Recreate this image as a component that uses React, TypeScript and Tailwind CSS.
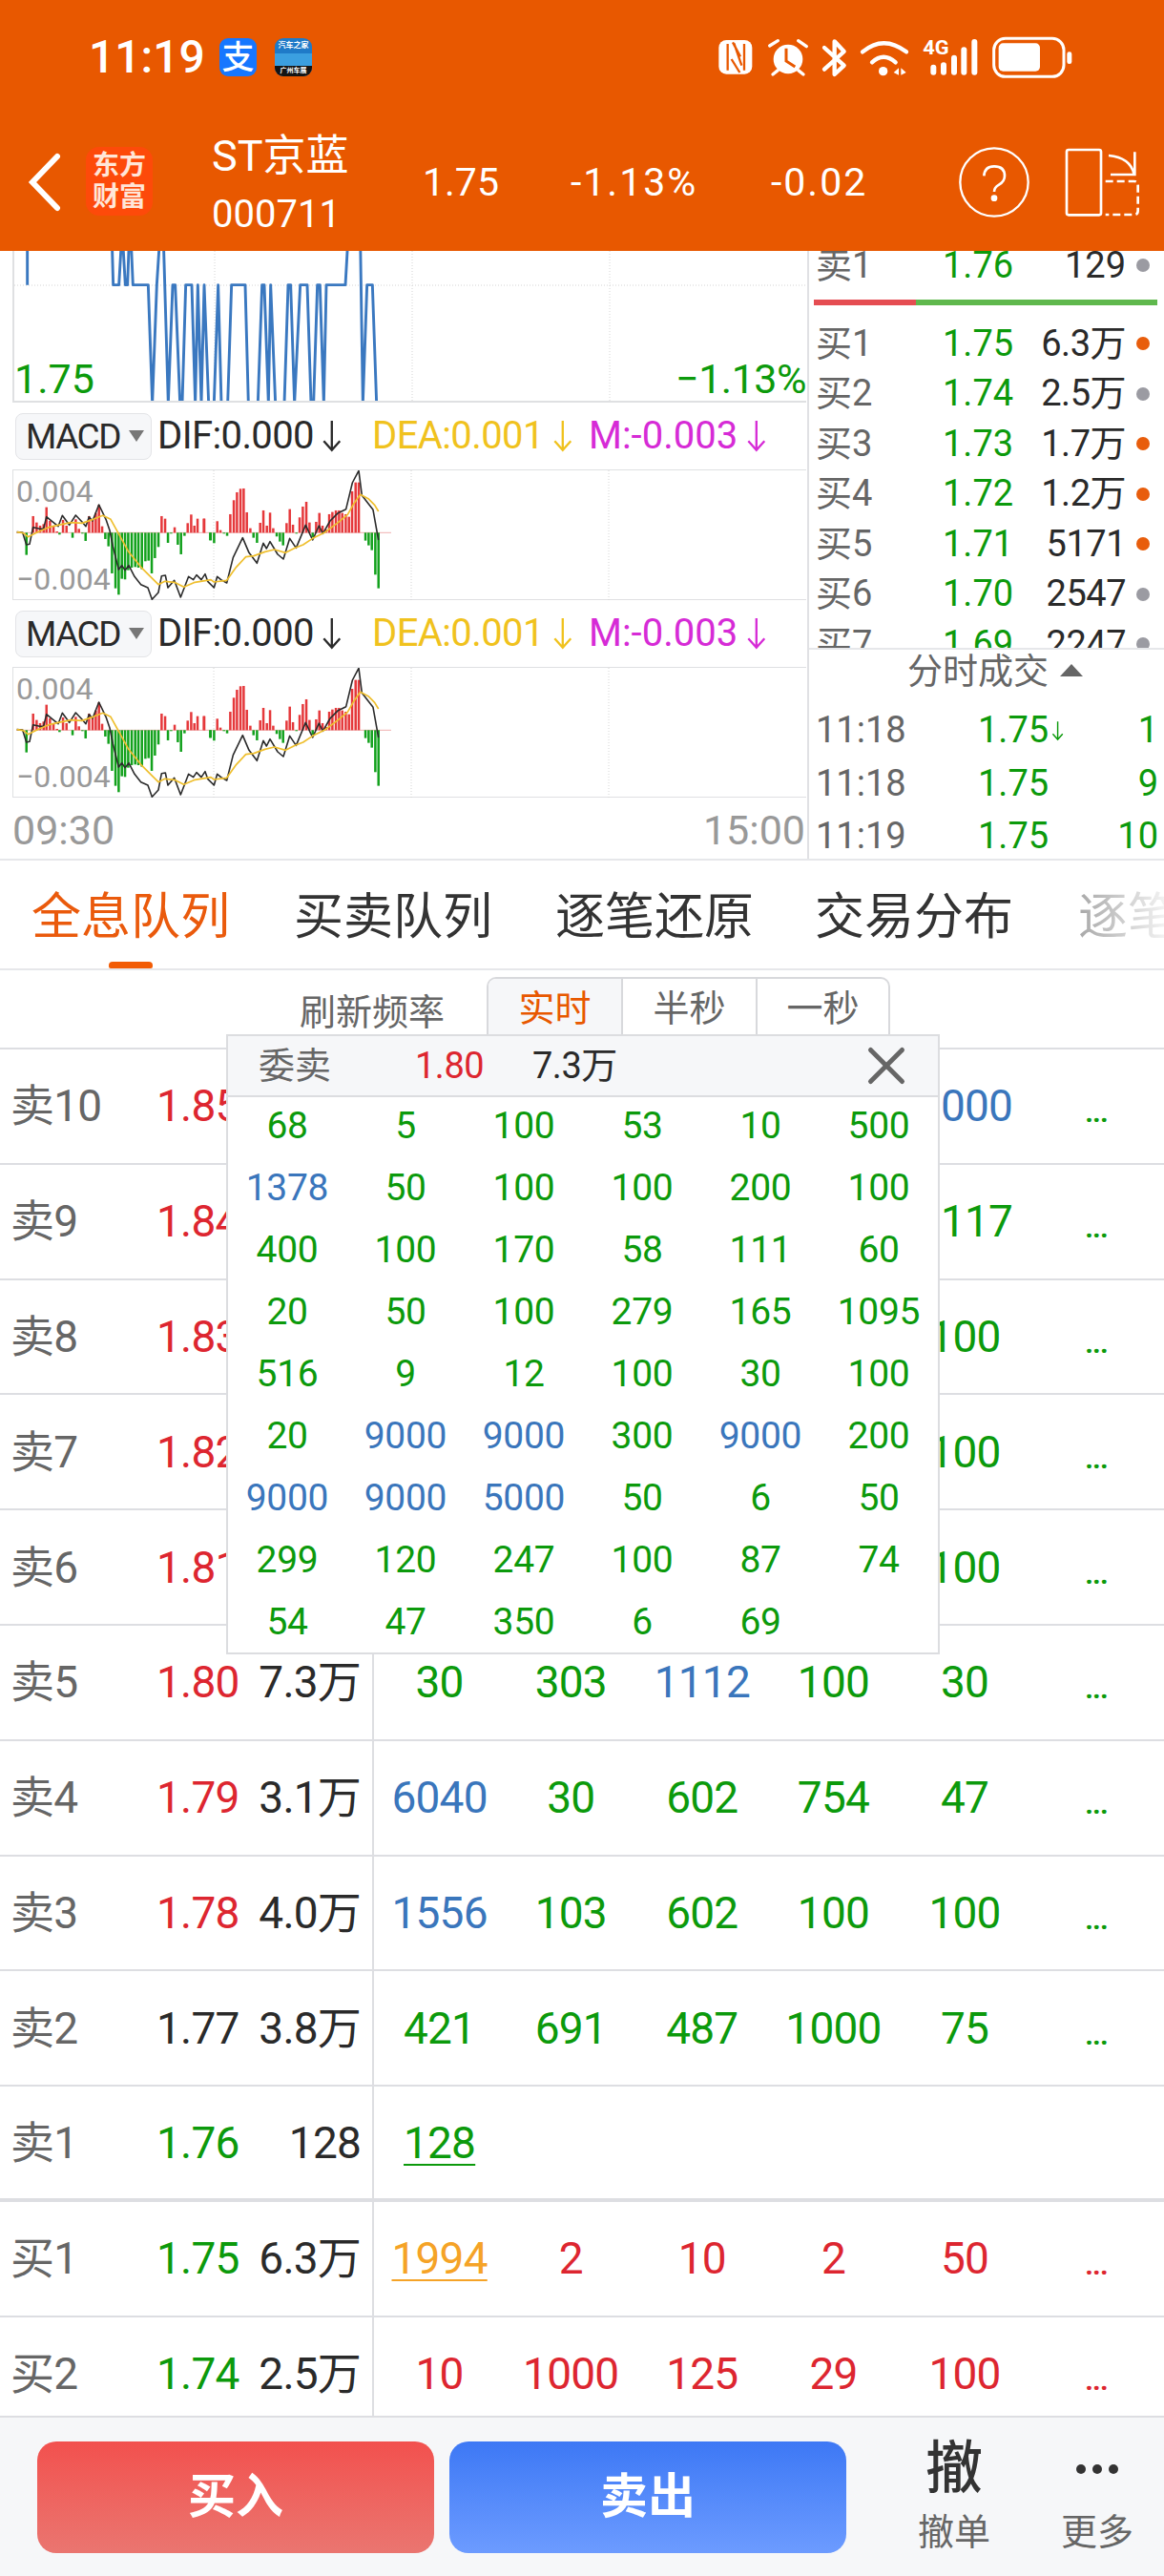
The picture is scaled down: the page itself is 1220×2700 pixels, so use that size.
import { X } from 'lucide-react'

const GREEN = 'text-[#0c9a0c]'
const RED = 'text-[#dd2630]'
const BLUE = 'text-[#3a76bc]'
const DARK = 'text-[#2a2a2a]'
const BLUE_VALUES = ['1378', '9000', '5000', '1112', '6040', '1556']

// histogram read off the chart, [x, height] in 3x crop coordinates
const barsLeft = [[50,-70],[71,52],[82,32],[93,22],[104,27],[113,80],[124,37],[135,22],[146,4],[154,-6],[165,40],[176,22],[195,-16],[205,42],[215,12],[226,-3],[236,-26],[247,52],[258,42],[268,62],[278,87],[288,20],[298,-20],[308,-43],[319,-128],[330,-175],[340,-195],[350,-145],[360,-147],[370,-118],[381,-110],[392,-108],[402,-110],[413,-115],[424,-90],[434,-88],[444,-128],[454,-80],[465,-45],[475,52],[486,44],[495,-32],[505,-3],[516,17],[526,-38],[536,-68],[547,-10],[557,30],[568,57],[578,22],[588,44],[608,44],[628,-24]]
const barsRight = [[9,44],[29,-24],[40,-33],[50,36],[60,8],[71,-3],[81,-10],[91,58],[102,102],[112,127],[123,138],[133,139],[143,64],[154,14],[164,-16],[175,-32],[185,31],[195,70],[206,22],[216,63],[226,14],[237,-12],[247,-28],[257,-40],[268,30],[278,74],[288,25],[299,-3],[309,48],[319,82],[330,97],[340,32],[350,-14],[361,34],[371,62],[381,22],[392,10],[402,58],[412,65],[423,70],[433,70],[443,62],[454,58],[464,50],[474,130],[485,158],[495,158],[516,-25],[526,-40],[536,-55],[547,-132],[557,-175]]
const difLeft = [[20,200],[38,201],[50,240],[60,238],[71,185],[92,190],[104,190],[113,152],[135,170],[150,182],[163,148],[185,178],[205,147],[225,168],[237,182],[247,152],[258,165],[278,114],[300,160],[312,195],[322,245],[340,318],[350,305],[360,320],[372,305],[390,340],[410,365],[432,375],[445,412],[465,390],[475,338],[487,336],[495,375],[515,352],[535,405],[560,340],[575,350],[585,335],[600,350]]
const difRight = [[12,332],[20,355],[40,375],[50,340],[62,350],[80,360],[100,280],[130,218],[150,265],[175,298],[195,235],[205,252],[216,230],[240,270],[258,285],[278,220],[298,250],[328,178],[350,225],[370,180],[382,205],[405,165],[430,140],[455,128],[475,45],[495,7],[505,85],[540,130],[557,225]]
const deaLeft = [[20,200],[40,203],[55,215],[85,200],[120,185],[150,178],[190,170],[225,172],[260,160],[290,148],[315,160],[340,205],[370,260],[410,310],[440,340],[465,365],[485,355],[515,358],[545,373],[580,358]]
const deaRight = [[30,350],[40,357],[80,352],[110,310],[140,278],[165,275],[200,262],[230,255],[265,265],[295,250],[320,240],[350,220],[390,200],[430,170],[460,145],[480,110],[500,82],[525,95],[545,115],[557,135]]

const toPoints = (left: number[][], right: number[][]) =>
  [...left.map(([x, y]) => `${x / 3 - 3},${y / 3 - 2}`), ...right.map(([x, y]) => `${x / 3 + 197},${y / 3 - 2}`)].join(' ')

const priceLine = '50,-30 50,110 M316,-30 320,110 338,110 346,-30 350,-30 358,110 365,110 370,-30 376,-30 382,110 430,110 443,482 457,110 466,-30 478,-30 493,482 507,110 515,110 530,482 537,482 548,110 567,110 578,482 586,110 597,482 606,110 620,482 637,482 650,110 660,482 680,482 692,110 735,110 745,482 775,482 788,110 795,110 808,482 815,110 830,482 858,482 870,110 878,110 890,482 908,110 930,110 942,482 950,482 962,110 970,110 982,482 990,110 1050,110 1058,-30 M1097,-30 1105,482 1118,110 1135,110 1148,482 1155,482'
const pricePath = 'M' + priceLine.split(' M').map((s) => s.split(' ').map((p) => {
  const [x, y] = p.split(',').map(Number)
  return `${x / 3 - 3},${y / 3 - 1}`
}).join(' L')).join(' M')

const depth = [
  { label: '买1', price: '1.75', vol: '6.3万', hot: true },
  { label: '买2', price: '1.74', vol: '2.5万', hot: false },
  { label: '买3', price: '1.73', vol: '1.7万', hot: true },
  { label: '买4', price: '1.72', vol: '1.2万', hot: true },
  { label: '买5', price: '1.71', vol: '5171', hot: true },
  { label: '买6', price: '1.70', vol: '2547', hot: false },
  { label: '买7', price: '1.69', vol: '2247', hot: false },
]

const ticks = [
  { time: '11:18', price: '1.75', down: true, vol: '1' },
  { time: '11:18', price: '1.75', down: false, vol: '9' },
  { time: '11:19', price: '1.75', down: false, vol: '10' },
]

const popupRows = [
  ['68', '5', '100', '53', '10', '500'],
  ['1378', '50', '100', '100', '200', '100'],
  ['400', '100', '170', '58', '111', '60'],
  ['20', '50', '100', '279', '165', '1095'],
  ['516', '9', '12', '100', '30', '100'],
  ['20', '9000', '9000', '300', '9000', '200'],
  ['9000', '9000', '5000', '50', '6', '50'],
  ['299', '120', '247', '100', '87', '74'],
  ['54', '47', '350', '6', '69', ''],
]

const queue = [
  { label: '卖10', price: '1.85', color: RED, vol: '', cells: ['', '', '', '', '9000'] },
  { label: '卖9', price: '1.84', color: RED, vol: '', cells: ['', '', '', '', '1117'] },
  { label: '卖8', price: '1.83', color: RED, vol: '', cells: ['', '', '', '', '100'] },
  { label: '卖7', price: '1.82', color: RED, vol: '', cells: ['', '', '', '', '100'] },
  { label: '卖6', price: '1.81', color: RED, vol: '', cells: ['', '', '', '', '100'] },
  { label: '卖5', price: '1.80', color: RED, vol: '7.3万', cells: ['30', '303', '1112', '100', '30'] },
  { label: '卖4', price: '1.79', color: RED, vol: '3.1万', cells: ['6040', '30', '602', '754', '47'] },
  { label: '卖3', price: '1.78', color: RED, vol: '4.0万', cells: ['1556', '103', '602', '100', '100'] },
  { label: '卖2', price: '1.77', color: DARK, vol: '3.8万', cells: ['421', '691', '487', '1000', '75'] },
]

function StatusIcons() {
  return (
    <svg viewBox="0 0 1200 210" className="w-[400px] h-[70px] block">
      <rect x="40" y="48" width="105" height="107" rx="24" fill="#fff" />
      <path d="M68 60V143M120 60V143M84 55L108 100M80 108L106 150M88 58L112 128" stroke="#e85800" strokeWidth="7" fill="none" />
      <circle cx="258" cy="108" r="46" fill="#fff" />
      <path d="M252 74V114L280 132" stroke="#e85800" strokeWidth="9" fill="none" />
      <path d="M200 66L226 50M290 50L316 68M210 156L226 143M290 143L306 156" stroke="#fff" strokeWidth="10" strokeLinecap="round" />
      <path d="M372 72L434 128L404 156V52L434 84L372 140" stroke="#fff" strokeWidth="13" fill="none" strokeLinejoin="round" strokeLinecap="round" />
      <path d="M492 85Q558 30 630 85M522 118Q558 84 596 118" stroke="#fff" strokeWidth="13" fill="none" strokeLinecap="round" />
      <circle cx="557" cy="146" r="14" fill="#fff" />
      <path d="M590 150L606 136V158ZM613 136L629 150L613 158Z" fill="#fff" />
      <text x="682" y="93" fontSize="60" fontWeight="700" fill="#fff" textLength="82" lengthAdjust="spacingAndGlyphs">4G</text>
      <rect x="706" y="125" width="18" height="33" rx="9" fill="#fff" />
      <rect x="738" y="118" width="18" height="40" rx="9" fill="#fff" />
      <rect x="771" y="95" width="18" height="63" rx="9" fill="#fff" />
      <rect x="802" y="70" width="18" height="88" rx="9" fill="#fff" />
      <rect x="835" y="45" width="18" height="113" rx="9" fill="#fff" />
      <rect x="905" y="43" width="220" height="120" rx="36" fill="none" stroke="#fff" strokeWidth="9" />
      <rect x="920" y="58" width="130" height="88" rx="14" fill="#fff" />
      <rect x="1135" y="85" width="15" height="38" rx="7" fill="#fff" />
    </svg>
  )
}

function NavIcons() {
  return (
    <svg viewBox="0 0 690 300" className="w-[230px] h-[100px] block">
      <circle cx="150" cy="150" r="107" fill="none" stroke="#fff" strokeWidth="7" />
      <path d="M118 130Q120 100 150 100Q183 100 183 130Q183 148 165 158Q150 166 150 180" fill="none" stroke="#fff" strokeWidth="8" />
      <circle cx="150" cy="200" r="10" fill="#fff" />
      <rect x="378" y="48" width="108" height="205" rx="6" fill="none" stroke="#fff" strokeWidth="8" />
      <path d="M500 147H590Q602 147 602 159V240Q602 252 590 252H500" fill="none" stroke="#fff" strokeWidth="8" strokeDasharray="24 12" />
      <path d="M510 66Q578 72 590 125M592 55V126H516" fill="none" stroke="#fff" strokeWidth="8" />
    </svg>
  )
}

function DownArrow({ color, size = 36 }: { color: string; size?: number }) {
  return (
    <svg width={size * 0.6} height={size} viewBox="0 0 20 34" className="block shrink-0">
      <path d="M10 2V31M2 22L10 31L18 22" fill="none" stroke={color} strokeWidth="2.2" />
    </svg>
  )
}

function MacdBar() {
  return (
    <div className="h-[70px] flex items-center pl-[16px] text-[40px] tracking-[-0.6px] leading-none">
      <div className="w-[143px] h-[49px] bg-[#f6f7f9] border border-[#e3e4e7] rounded-[8px] flex items-center pl-[10px] text-[#2a2a2a] shrink-0">
        <span className="text-[37px] tracking-[-1.5px]">MACD</span>
        <span className="ml-[9px] w-0 h-0 border-l-[8px] border-r-[8px] border-t-[12px] border-l-transparent border-r-transparent border-t-[#777]"></span>
      </div>
      <div className="w-[225px] ml-[6px] flex items-center gap-[8px] text-[#2a2a2a] shrink-0">DIF:0.000<DownArrow color="#2a2a2a" /></div>
      <div className="w-[227px] flex items-center gap-[9px] text-[#f0c21e] shrink-0">DEA:0.001<DownArrow color="#f0c21e" /></div>
      <div className="flex items-center gap-[9px] text-[#d62bd6] tracking-[0px] shrink-0">M:-0.003<DownArrow color="#d62bd6" /></div>
    </div>
  )
}

function MacdChart() {
  const zero = 65.3
  return (
    <div className="relative h-[137px] ml-[13px] w-[832px] border border-r-0 border-[#dfe0e2]">
      <svg viewBox="0 0 832 136" className="block w-[832px] h-[136px]">
        {[210, 417, 624].map((x) => (
          <line key={x} x1={x} x2={x} y1="0" y2="136" stroke="#d4d4d4" strokeWidth="1" strokeDasharray="1 2" />
        ))}
        <line x1="3" x2="396" y1={zero} y2={zero} stroke="#f0b0b0" strokeWidth="1" />
        {barsLeft.map(([x, h]) => (
          <rect key={'l' + x} x={x / 3 - 4.2} width="2.5" y={h > 0 ? zero - h / 3 : zero} height={Math.abs(h) / 3} fill={h > 0 ? '#e5383b' : '#12a11c'} />
        ))}
        {barsRight.map(([x, h]) => (
          <rect key={'r' + x} x={x / 3 + 195.8} width="2.5" y={h > 0 ? zero - h / 3 : zero} height={Math.abs(h) / 3} fill={h > 0 ? '#e5383b' : '#12a11c'} />
        ))}
        <polyline points={toPoints(difLeft, difRight)} fill="none" stroke="#2b2b2b" strokeWidth="1.6" strokeLinejoin="round" />
        <polyline points={toPoints(deaLeft, deaRight)} fill="none" stroke="#efbf2e" strokeWidth="1.7" strokeLinejoin="round" />
      </svg>
      <span className="absolute left-[3px] top-[3px] text-[32px] leading-[38px] text-[#999]">0.004</span>
      <span className="absolute left-[3px] bottom-[2px] text-[32px] leading-[38px] text-[#999]">−0.004</span>
    </div>
  )
}

function QueueRow({ label, price, color, vol, cells, dotColor, thick }: { label: string; price: string; color: string; vol: string; cells: React.ReactNode[]; dotColor: string; thick?: boolean }) {
  return (
    <div className={'flex items-stretch h-[120.8px] border-b-[#dddee2] ' + (thick ? 'border-b-[4px]' : 'border-b-[2px]')}>
      <div className="w-[164px] pl-[11px] flex items-center text-[#666] shrink-0">{label}</div>
      <div className={'w-[91px] flex items-center shrink-0 ' + color}>{price}</div>
      <div className="w-[123px] flex items-center justify-end text-[#2a2a2a] shrink-0">{vol}</div>
      <div className="flex ml-[12px] border-l-2 border-[#dddee2]">
        {cells.map((cell, i) => (
          <div key={i} className="w-[138px] flex items-center justify-center ml-[-0.4px]">{cell}</div>
        ))}
        {dotColor && <div className={'w-[138px] flex items-center justify-center text-[30px] font-bold pt-[14px] ' + dotColor}>...</div>}
      </div>
    </div>
  )
}

const cellColor = (v: string) => (BLUE_VALUES.includes(v) ? BLUE : GREEN)

export default function App() {
  return (
    <div className="relative w-[1220px] h-[2700px] overflow-hidden bg-white [font-family:Roboto,'Noto_Sans_CJK_SC',sans-serif]">
      {/* top bar */}
      <header className="h-[263px] bg-[#e85800] text-white">
        <div className="h-[118px] flex pt-[25px]">
          <div className="flex items-center h-[70px] pl-[93px]">
            <span className="text-[48px] font-medium leading-none w-[137px]">11:19</span>
            <div className="w-[39px] h-[40px] rounded-[9px] bg-[#1677ff] flex items-center justify-center text-[34px] font-medium">支</div>
            <div className="ml-[19px] w-[39px] h-[40px] rounded-[9px] overflow-hidden bg-[#1f7ac8] flex flex-col items-center">
              <span className="text-[8px] leading-[16px] font-bold whitespace-nowrap">汽车之家</span>
              <span className="flex-1 w-full bg-[#3b9fe0]"></span>
              <span className="w-full bg-[#141414] text-[7px] leading-[11px] text-center font-bold whitespace-nowrap">广州车展</span>
            </div>
          </div>
          <div className="ml-[413px] mt-[1px]"><StatusIcons /></div>
        </div>
        <div className="h-[145px] flex items-center">
          <svg width="36" height="62" viewBox="0 0 36 62" className="ml-[28px] shrink-0">
            <path d="M32 4L6 31L32 58" fill="none" stroke="#fff" strokeWidth="6" strokeLinecap="round" />
          </svg>
          <div className="ml-[26px] w-[70px] h-[72px] rounded-[14px] bg-[#fd4a0a] flex flex-col items-center justify-center text-[28px] leading-[33px] font-bold text-[#ffe6d8] mt-[-1px] shrink-0">
            <span>东方</span>
            <span>财富</span>
          </div>
          <div className="ml-[62px] w-[221px] shrink-0 mt-[2px]">
            <div className="text-[45px] leading-[54px]">ST京蓝</div>
            <div className="text-[40px] leading-[44px] mt-[12px]">000711</div>
          </div>
          <div className="w-[155px] text-[41px] mt-[2px] shrink-0">1.75</div>
          <div className="w-[210px] text-[41px] mt-[2px] tracking-[2px] shrink-0">-1.13%</div>
          <div className="w-[182px] text-[41px] mt-[2px] tracking-[2px] shrink-0">-0.02</div>
          <div className="ml-[2px]"><NavIcons /></div>
        </div>
      </header>

      {/* chart + quote panel */}
      <section className="h-[639px] flex border-b-2 border-[#e6e7ea]">
        <div className="w-[846px] shrink-0">
          <div className="relative h-[159px] ml-[13px] w-[832px] border-l-2 border-b-2 border-[#dfe0e2] overflow-hidden">
            <svg viewBox="0 0 832 159" className="block w-[832px] h-[159px]">
              <line x1="0" x2="832" y1="36" y2="36" stroke="#d4d4d4" strokeDasharray="1 2" />
              {[210, 417, 624].map((x) => (
                <line key={x} x1={x} x2={x} y1="0" y2="159" stroke="#d4d4d4" strokeDasharray="1 2" />
              ))}
              <path d={pricePath} fill="none" stroke="#3a78c0" strokeWidth="2.9" strokeLinejoin="round" />
            </svg>
            <span className={'absolute left-[0px] bottom-[-2px] text-[43px] leading-[50px] ' + GREEN}>1.75</span>
            <span className={'absolute right-0 bottom-[-2px] text-[43px] leading-[50px] tracking-[-0.5px] ' + GREEN}>−1.13%</span>
          </div>
          <MacdBar />
          <MacdChart />
          <MacdBar />
          <MacdChart />
          <div className="flex justify-between pl-[13px] pr-[2px] pt-[9px] text-[43px] leading-[50px] text-[#999]">
            <span>09:30</span>
            <span>15:00</span>
          </div>
        </div>
        <div className="flex-1 border-l-2 border-[#e0e1e4] text-[38px] overflow-hidden">
          <div className="h-[418px] overflow-hidden border-b-2 border-[#e6e7ea]">
            <div className="mt-[-11px] h-[52px] flex items-center pl-[7px]">
              <span className="w-[133px] text-[#666]">卖1</span>
              <span className={'w-[84px] ' + GREEN}>1.76</span>
              <span className="w-[108px] text-right text-[#2a2a2a]">129</span>
              <span className="ml-[11px] w-[14px] h-[14px] rounded-full bg-[#9b9ba2]"></span>
            </div>
            <div className="mt-[10px] ml-[5px] w-[360px] h-[6px] flex">
              <div className="w-[107px] bg-[#e54d52]"></div>
              <div className="flex-1 bg-[#5fb84d]"></div>
            </div>
            <div className="mt-[14px]">
              {depth.map((d) => (
                <div key={d.label} className="h-[52.5px] flex items-center pl-[7px]">
                  <span className="w-[133px] text-[#666]">{d.label}</span>
                  <span className={'w-[84px] ' + GREEN}>{d.price}</span>
                  <span className="w-[108px] text-right text-[#2a2a2a] tracking-[-0.5px]">{d.vol}</span>
                  <span className={'ml-[11px] w-[14px] h-[14px] rounded-full ' + (d.hot ? 'bg-[#e85d0c]' : 'bg-[#9b9ba2]')}></span>
                </div>
              ))}
            </div>
          </div>
          <div className="h-[57px] pb-[10px] flex items-center justify-center text-[37px] text-[#666] pl-[18px]">
            分时成交
            <span className="ml-[12px] mb-[4px] w-0 h-0 border-l-[12px] border-r-[12px] border-b-[13px] border-l-transparent border-r-transparent border-b-[#666]"></span>
          </div>
          {ticks.map((t, i) => (
            <div key={i} className="h-[55.5px] flex items-center pl-[7px] pr-[6px]">
              <span className="w-[170px] text-[#666]">{t.time}</span>
              <span className={'flex items-center gap-[3px] w-[120px] ' + GREEN}>
                {t.price}
                {t.down && <DownArrow color="#0c9a0c" size={22} />}
              </span>
              <span className={'flex-1 text-right ' + GREEN}>{t.vol}</span>
            </div>
          ))}
        </div>
      </section>

      {/* tabs */}
      <nav className="relative h-[115px] flex pl-[33px] pt-[31px] border-b-2 border-[#e6e7ea] text-[52px] leading-[58px] text-[#333] overflow-hidden">
        <span className="w-[275px] text-[#ea5a0c] shrink-0">全息队列</span>
        <span className="w-[274px] shrink-0">买卖队列</span>
        <span className="w-[272px] shrink-0">逐笔还原</span>
        <span className="w-[276px] shrink-0">交易分布</span>
        <span className="w-[90px] overflow-hidden whitespace-nowrap shrink-0 bg-gradient-to-r from-[#a8a8a8] to-[#f2f2f2] bg-clip-text text-transparent">逐笔</span>
        <span className="absolute left-[114px] bottom-0 w-[46px] h-[7px] rounded-t-[4px] rounded-b-[2px] bg-[#f25c05]"></span>
      </nav>

      {/* refresh rate */}
      <div className="h-[81px] flex pl-[314px] pt-[7px] text-[38px]">
        <span className="w-[196px] text-[#666] pt-[14px] leading-[46px]">刷新频率</span>
        <div className="flex h-[74px] border-2 border-b-0 border-[#d8d9dc] rounded-t-[10px] overflow-hidden text-[#666] leading-[62px] text-center">
          <span className="w-[139px] bg-[#f6f7f9] text-[#e85800]">实时</span>
          <span className="w-[141px] border-l-2 border-[#d8d9dc]">半秒</span>
          <span className="w-[139px] border-l-2 border-[#d8d9dc]">一秒</span>
        </div>
      </div>

      {/* order queue */}
      <div className="border-t-2 border-[#dddee2] text-[46px] tracking-[-0.8px] leading-none">
        {queue.map((q) => (
          <QueueRow
            key={q.label}
            label={q.label}
            price={q.price}
            color={q.color}
            vol={q.vol}
            dotColor={GREEN}
            cells={q.cells.map((v, i) => <span key={i} className={cellColor(v)}>{v}</span>)}
          />
        ))}
        <QueueRow
          label="卖1"
          price="1.76"
          color={GREEN}
          vol="128"
          dotColor=""
          thick
          cells={[<span key="0" className={'underline decoration-2 underline-offset-[6px] ' + GREEN}>128</span>]}
        />
        <QueueRow
          label="买1"
          price="1.75"
          color={GREEN}
          vol="6.3万"
          dotColor={RED}
          cells={[
            <span key="0" className="text-[#f5a327] underline decoration-2 underline-offset-[6px]">1994</span>,
            ...['2', '10', '2', '50'].map((v, i) => <span key={i + 1} className={RED}>{v}</span>),
          ]}
        />
        <div className="h-[103px] overflow-hidden">
          <QueueRow
            label="买2"
            price="1.74"
            color={GREEN}
            vol="2.5万"
            dotColor={RED}
            cells={['10', '1000', '125', '29', '100'].map((v, i) => <span key={i} className={RED}>{v}</span>)}
          />
        </div>
      </div>

      {/* bottom actions */}
      <footer className="h-[170px] bg-[#f6f7f9] border-t-2 border-[#dddee2] flex pl-[39px] pt-[25px] gap-[16px]">
        <button className="w-[416px] h-[117px] rounded-[20px] bg-gradient-to-b from-[#f2504e] to-[#ea7570] text-white text-[50px] font-bold">买入</button>
        <button className="w-[416px] h-[117px] rounded-[20px] bg-gradient-to-b from-[#3d78f5] to-[#6c9bff] text-white text-[50px] font-bold">卖出</button>
        <div className="w-[78px] ml-[58px] mt-[-4px] flex flex-col items-center shrink-0">
          <span className="text-[60px] leading-[66px] font-medium text-[#333]">撤</span>
          <span className="text-[38px] leading-[46px] mt-[10px] text-[#666] whitespace-nowrap">撤单</span>
        </div>
        <div className="w-[78px] ml-[56px] mt-[-4px] flex flex-col items-center shrink-0">
          <div className="h-[66px] flex items-center gap-[7px]">
            <span className="w-[10px] h-[10px] rounded-full bg-[#333]"></span>
            <span className="w-[10px] h-[10px] rounded-full bg-[#333]"></span>
            <span className="w-[10px] h-[10px] rounded-full bg-[#333]"></span>
          </div>
          <span className="text-[38px] leading-[46px] mt-[10px] text-[#666] whitespace-nowrap">更多</span>
        </div>
      </footer>

      {/* popup over the queue */}
      <div className="absolute left-[237px] top-[1084px] w-[748px] h-[650px] bg-white border-2 border-[#dcdde0] overflow-hidden">
        <div className="h-[64px] bg-[#f6f7f9] border-b-2 border-[#dcdde0] flex items-center text-[38px] pl-[32px]">
          <span className="w-[164px] text-[#666]">委卖</span>
          <span className={'w-[123px] tracking-[-0.5px] ' + RED}>1.80</span>
          <span className="w-[338px] text-[#2a2a2a] tracking-[-0.5px]">7.3万</span>
          <X size={66} strokeWidth={1.8} className="text-[#666] shrink-0 my-[-6px]" />
        </div>
        <div className="mt-[-2px] grid grid-cols-6 text-[39px] tracking-[-0.3px] leading-none">
          {popupRows.flat().map((v, i) => (
            <div key={i} className={'h-[65px] flex items-center justify-center ' + cellColor(v)}>{v}</div>
          ))}
        </div>
      </div>
    </div>
  )
}
